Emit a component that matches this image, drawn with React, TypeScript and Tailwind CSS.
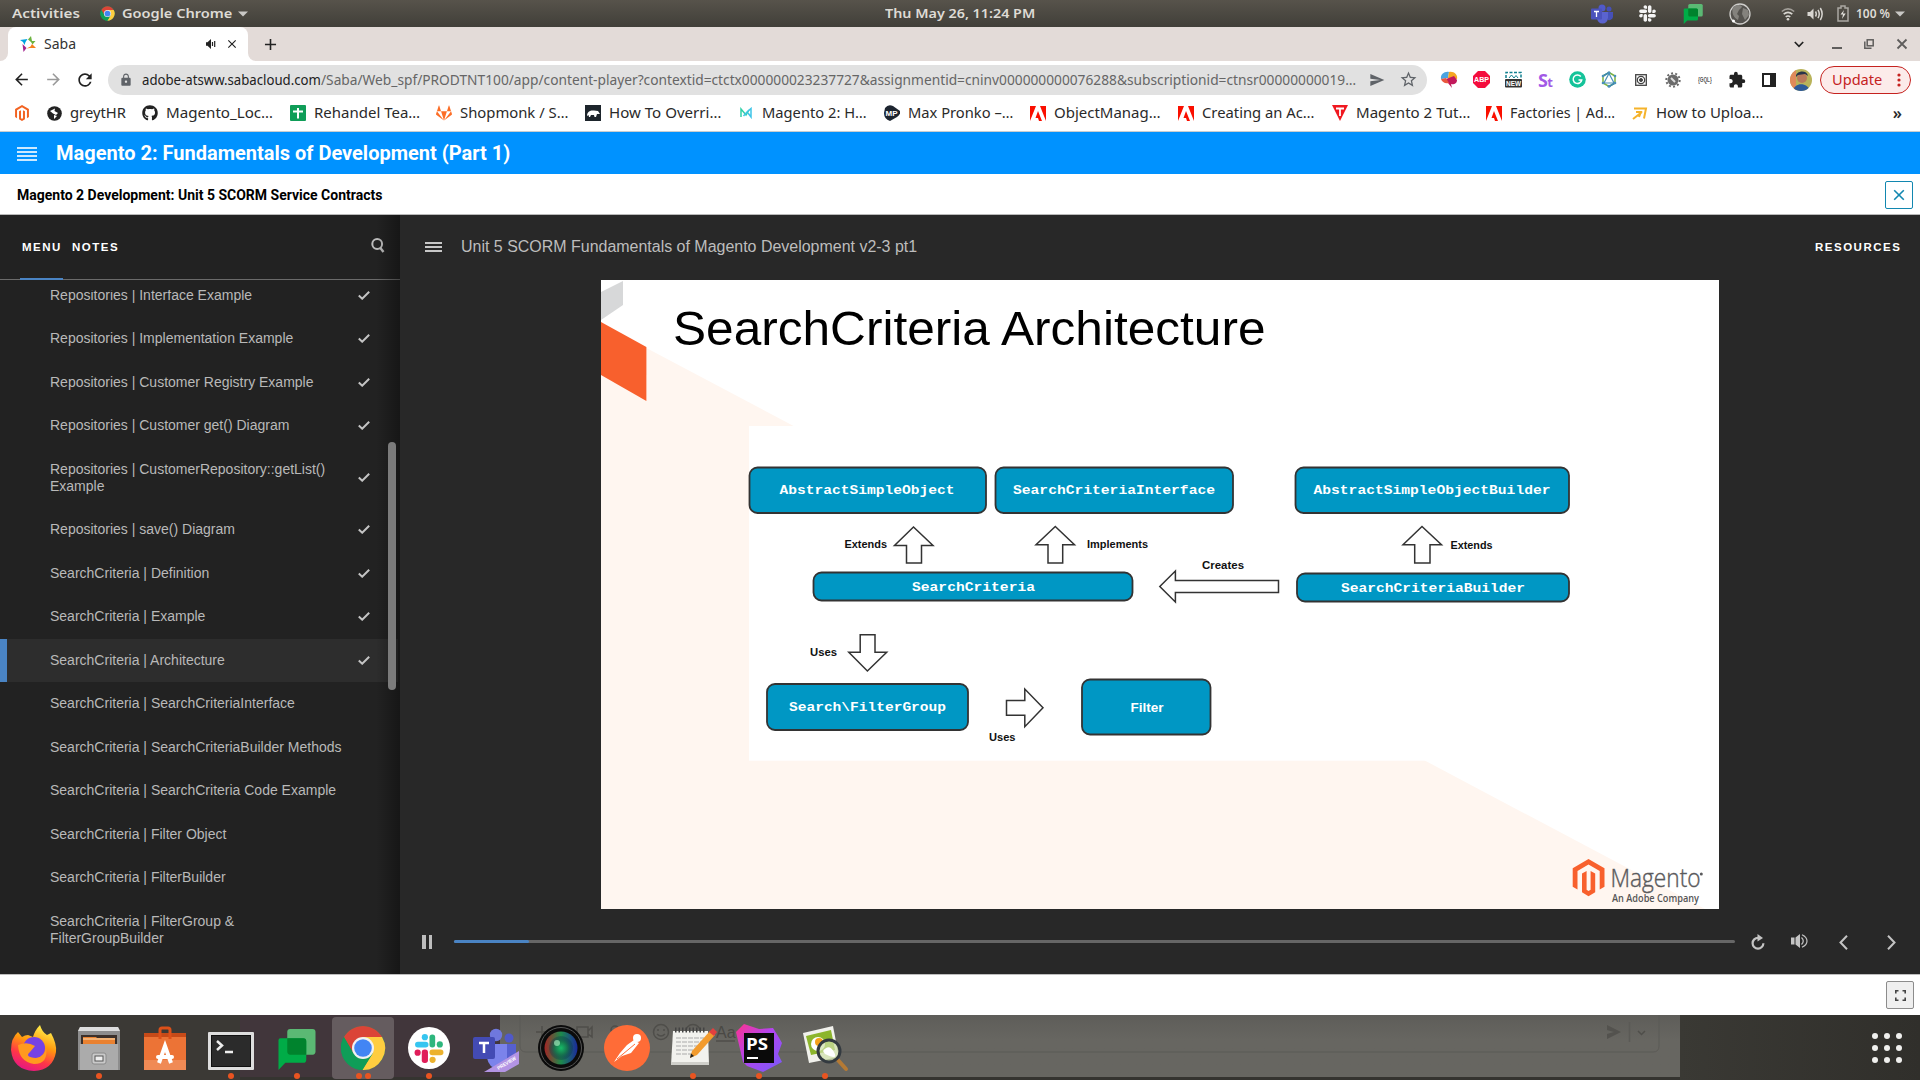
import { useLayoutEffect, useRef, useState, type ReactNode } from "react";
import { FaGithub, FaGitlab, FaMagento, FaSlack } from "react-icons/fa";
import { MdLock, MdStarBorder, MdExtension, MdSend, MdRefresh, MdArrowBack, MdArrowForward, MdClose, MdAdd } from "react-icons/md";

/** One line of text, stretched or squeezed to a given width. */
function Fit({ w, children, className = "" }: { w: number; children: ReactNode; className?: string }) {
  const ref = useRef<HTMLSpanElement>(null);
  const [k, setK] = useState(1);
  useLayoutEffect(() => {
    if (ref.current) setK(w / ref.current.offsetWidth);
  }, [w]);
  return (
    <span className={"block shrink-0 whitespace-pre " + className} style={{ width: w }}>
      <span ref={ref} className="inline-block origin-left" style={{ transform: `scaleX(${k})` }}>
        {children}
      </span>
    </span>
  );
}

function ChromeLogo({ size }: { size: number }) {
  return (
    <svg width={size} height={size} viewBox="0 0 48 48" className="shrink-0">
      <circle cx="24" cy="24" r="23" fill="#0f9d58" />
      <path d="M24 24 L4.1 12.5 A23 23 0 0 1 43.9 12.5 L24 12.5Z" fill="#db4437" />
      <path d="M24 12.5 H43.9 A23 23 0 0 1 23 47 L34 29.7Z" fill="#ffcd40" />
      <path d="M4.1 12.5 L14 29.7 L24 24 L24 12.5Z" fill="#db4437" />
      <path d="M4.1 12.5 L14.1 29.8 L24 35.5 L34 29.7 L23.5 47 A23 23 0 0 1 4.1 12.5Z" fill="#0f9d58" />
      <circle cx="24" cy="24" r="11.5" fill="#f1f1f1" />
      <circle cx="24" cy="24" r="9.2" fill="#4285f4" />
    </svg>
  );
}

function ChatLogo({ size }: { size: number }) {
  return (
    <svg width={size} height={size} viewBox="0 0 40 40" className="shrink-0">
      <rect x="10.500" y="0" width="29" height="25" rx="3" fill="#5bb974" />
      <path d="M3.500 9 H27 a3 3 0 0 1 3 3 V30 a3 3 0 0 1 -3 3 H8.500 L1.500 40 V11 a2 2 0 0 1 2-2Z" fill="#00ac47" />
      <path d="M10.500 9 H27 a3 3 0 0 1 3 3 V25 H13.500 a3 3 0 0 1 -3-3Z" fill="#00832d" />
    </svg>
  );
}

function Triangle() {
  return (
    <svg width="10" height="6" viewBox="0 0 10 6" className="shrink-0">
      <path d="M0 0.500H10L5 5.500Z" fill="#c9c8c5" />
    </svg>
  );
}

function TopBar() {
  return (
    <div className="grid h-[27px] grid-cols-3 items-center bg-linear-to-b from-[#57534b] to-[#413f39] font-['Noto_Sans'] text-[13px] leading-none font-semibold text-[#dedbd5]">
      <div className="flex items-center pl-[12px]">
        <Fit w={68}>Activities</Fit>
        <div className="ml-5"><ChromeLogo size={15} /></div>
        <Fit w={110} className="mr-[6px] ml-[7px]">Google Chrome</Fit>
        <Triangle />
      </div>
      <div className="flex justify-center">
        <Fit w={150}>Thu May 26, 11:24 PM</Fit>
      </div>
      <div className="flex items-center justify-end pr-[15px]">
        <svg width="22" height="20" viewBox="0 0 22 20" className="mr-[25px]">
          <circle cx="11" cy="4" r="3.500" fill="#5059c9" />
          <circle cx="18" cy="5" r="2.500" fill="#4650b8" />
          <path d="M6 8H17V14a5.500 5.500 0 0 1-11 0Z" fill="#5a63cf" />
          <path d="M17 8H22V13a4 4 0 0 1-5 3Z" fill="#4650b8" />
          <rect y="4.500" width="11" height="11" rx="1" fill="#4b53bc" />
          <path d="M3 7.500H8M5.500 7.500V13" stroke="#fff" strokeWidth="1.300" />
        </svg>
        <FaSlack size={19} color="#f4f4f4" className="mr-[26px]" />
        <div className="mr-[26px]"><ChatLogo size={20} /></div>
        <svg width="22" height="22" viewBox="0 0 22 22" className="mr-[30px]">
          <circle cx="11" cy="11" r="10" fill="#55534f" stroke="#cfcecb" strokeWidth="1.300" />
          <path d="M4 4C8 1 13 2 13 4L10 7 8 11 10 13 9 17C5 15 2 10 4 4ZM14 5L19 7 20 12 16 17 13 11Z" fill="#84827d" />
          <circle cx="4.500" cy="18" r="1.500" fill="#fff" />
        </svg>
        <svg width="14" height="14" viewBox="0 0 14 14" className="mr-[12px]" fill="none" stroke="#d8d6d1">
          <path d="M0.800 4.500Q7-0.800 13.200 4.500" strokeWidth="1.500" opacity=".6" />
          <path d="M2.700 7.200Q7 3.600 11.300 7.200" strokeWidth="1.700" />
          <path d="M4.700 9.800Q7 8 9.300 9.800" strokeWidth="1.500" />
          <circle cx="7" cy="12.300" r="1.300" fill="#d8d6d1" stroke="none" />
        </svg>
        <svg width="17" height="14" viewBox="0 0 17 14" className="mr-[13px]" fill="none" stroke="#d8d6d1" strokeWidth="1.500">
          <path d="M0.500 5H3L6.500 1.500V12.500L3 9H0.500Z" fill="#d8d6d1" stroke="none" />
          <path d="M8.500 4.500Q10 7 8.500 9.500M11 2.800Q13.500 7 11 11.200M13.300 1Q17 7 13.300 13" />
        </svg>
        <svg width="12" height="17" viewBox="0 0 12 17" className="mr-[7px]" fill="none" stroke="#aaa8a3" strokeWidth="1.500">
          <path d="M1 3H4V1H8V3H11V16H1Z" />
          <path d="M7 5L3.500 9.500H6L5 14 8.700 8.500H6Z" fill="#e4e2dd" stroke="none" />
        </svg>
        <Fit w={34} className="mr-[5px]">100 %</Fit>
        <Triangle />
      </div>
    </div>
  );
}

function TabStrip() {
  return (
    <div className="flex h-[34px] items-center bg-[#e3dbd8] text-[#333]">
      <div className="flex h-full w-2 items-end bg-white"><div className="h-full w-full rounded-br-lg bg-[#e3dbd8]" /></div>
      <div className="flex h-full w-60 items-center rounded-t-lg bg-white pl-3">
        <svg width="16" height="16" viewBox="0 0 16 16">
          <path d="M0 4L7.500 3 5.500 6 4.500 9 3 6Z" fill="#00a3e0" />
          <path d="M8 3.500L11 0 12 5 15.500 5 12.500 8.500 11 6Z" fill="#6cb33f" />
          <path d="M2.500 8L5.500 11 6.500 12 3.500 16Z" fill="#a3238e" />
          <path d="M12 8L16 12 10 12 6.500 12.500 10.500 10.500Z" fill="#f58220" />
        </svg>
        <Fit w={32} className="ml-2 font-['Noto_Sans'] text-[14px] leading-none">Saba</Fit>
        <svg width="10" height="10" viewBox="0 0 10 10" className="ml-[130px]" fill="#222">
          <path d="M0 3.200H1.500L5 0V10L1.500 6.800H0Z" />
          <path d="M6.500 3V7M8.700 2V8" stroke="#222" strokeWidth="1.200" />
        </svg>
        <MdClose size={14} className="ml-[9px]" color="#222" />
      </div>
      <div className="flex h-full w-2 bg-white"><div className="h-full w-full rounded-bl-lg bg-[#e3dbd8]" /></div>
      <MdAdd size={19} color="#222" className="ml-[5px]" />
      <div className="ml-auto flex items-center pr-[12px] text-[#5f5d5c]">
        <svg width="10" height="7" viewBox="0 0 10 7" className="mr-[28px]"><path d="M0.800 1L5 5.300 9.200 1" fill="none" stroke="#222" strokeWidth="1.700" /></svg>
        <div className="mt-[7px] mr-[22px] h-[2px] w-[10px] bg-current" />
        <svg width="10" height="10" viewBox="0 0 10 10" className="mr-[22px]" fill="none" stroke="currentColor" strokeWidth="1.500">
          <rect x="3.200" y="0.800" width="6" height="6" />
          <path d="M0.800 2.500V9.200H7.500" />
        </svg>
        <svg width="12" height="12" viewBox="0 0 12 12"><path d="M1.500 1.500L10.500 10.500M10.500 1.500L1.500 10.500" stroke="currentColor" strokeWidth="1.800" /></svg>
      </div>
    </div>
  );
}

const extensions: ReactNode[] = [
  <svg key="brain" width="18" height="18" viewBox="0 0 18 18">
    <path d="M1 8C0 3 5 0 9 1L8 7Z" fill="#4aa3e0" /><path d="M9 1C14 0 18 4 17 8L8 7Z" fill="#f5a623" />
    <path d="M6 8L14 5 17 9C17 13 13 14 11 13L12 17 8 12Z" fill="#c2185b" /><path d="M1 8L6 7 9 12C5 13 2 11 1 8Z" fill="#e9573f" />
  </svg>,
  <svg key="abp" width="17" height="17" viewBox="0 0 17 17">
    <path d="M5 0H12L17 5V12L12 17H5L0 12V5Z" fill="#f40d3d" />
    <text x="8.500" y="11.200" textAnchor="middle" fontSize="7.500" fontWeight="700" fill="#fff" fontFamily="Liberation Sans" textLength="15" lengthAdjust="spacingAndGlyphs">ABP</text>
  </svg>,
  <svg key="new" width="17" height="17" viewBox="0 0 17 17">
    <path d="M1 7V1.500H16V7" fill="none" stroke="#12808f" strokeWidth="1.500" strokeDasharray="3 1.500" /><path d="M4 7L6.500 4 9 7 11 4.500 13 7" fill="none" stroke="#12808f" />
    <rect y="8" width="17" height="8.500" rx="1" fill="#333" />
    <text x="8.500" y="14.700" textAnchor="middle" fontSize="7" fontWeight="700" fill="#fff" fontFamily="Liberation Sans" textLength="15" lengthAdjust="spacingAndGlyphs">NEW</text>
  </svg>,
  <span key="st" className="font-['Open_Sans'] text-[18px] leading-none font-bold tracking-tighter text-[#a259e6]">S<span className="text-[13px]">t</span></span>,
  <svg key="g" width="17" height="17" viewBox="0 0 17 17">
    <circle cx="8.500" cy="8.500" r="8.300" fill="#15c39a" /><path d="M11.800 5.500A4.300 4.300 0 1 0 12.700 9H9.500" fill="none" stroke="#fff" strokeWidth="1.500" />
  </svg>,
  <svg key="hex" width="16" height="17" viewBox="0 0 16 17" fill="none" strokeWidth="1.500">
    <path d="M8 1.500L14 5V12L8 15.500 2 12V5Z" stroke="#7cb342" /><path d="M8 2.500L13 12H3Z" stroke="#4a90b8" strokeWidth="1.200" /><path d="M8 1.500L2 5M8 15.500L14 12" stroke="#3c87b0" />
    <g fill="#4a90b8" stroke="none"><circle cx="8" cy="1.700" r="1.500" /><circle cx="2" cy="5" r="1.300" /><circle cx="14" cy="5" r="1.300" /><circle cx="2" cy="12" r="1.300" /><circle cx="14" cy="12" r="1.300" /><circle cx="8" cy="15.300" r="1.500" /></g>
  </svg>,
  <svg key="box" width="12" height="12" viewBox="0 0 12 12" fill="none" stroke="#444">
    <rect x="0.700" y="0.700" width="10.600" height="10.600" strokeWidth="1.300" /><circle cx="6" cy="6" r="3.700" strokeWidth="1.300" /><circle cx="6" cy="6" r="1.500" fill="#444" />
  </svg>,
  <svg key="bug" width="16" height="16" viewBox="0 0 16 16">
    <circle cx="8" cy="8" r="5.500" fill="#6b6b6b" /><circle cx="8" cy="8" r="6.700" fill="none" stroke="#6b6b6b" strokeWidth="2" strokeDasharray="2 2.200" />
    <path d="M6 6L10 10" stroke="#ddd" strokeWidth="2" />
  </svg>,
  <Fit key="gql" w={14} className="font-['Liberation_Sans'] text-[7px] font-bold text-[#555]">{"{GQL}"}</Fit>,
  <MdExtension key="ext" size={18} color="#222" />,
  <svg key="panel" width="14" height="14" viewBox="0 0 14 14"><rect x="1" y="1" width="12" height="12" fill="#fff" stroke="#222" strokeWidth="2" /><rect x="8" y="1" width="5" height="12" fill="#222" /></svg>,
  <svg key="avatar" width="22" height="22" viewBox="0 0 22 22">
    <defs><clipPath id="face"><circle cx="11" cy="11" r="11" /></clipPath></defs>
    <g clipPath="url(#face)">
      <rect width="22" height="22" fill="#b9b35a" /><rect x="0" width="6" height="22" fill="#e08a5b" />
      <circle cx="12" cy="9" r="5" fill="#b9795b" /><path d="M6 8C5 2 17 0 18 7L15 5 8 6Z" fill="#29344a" /><path d="M3 22C4 13 18 13 20 22Z" fill="#2e5b9a" />
    </g>
  </svg>,
];

function Toolbar() {
  return (
    <div className="flex h-[37px] items-center bg-white pr-[9px] font-['Noto_Sans'] text-[14px] leading-none">
      <div className="flex pl-[5px]">
        <span className="flex w-8 justify-center"><MdArrowBack size={19} color="#222" /></span>
        <span className="flex w-8 justify-center"><MdArrowForward size={19} color="#9a9a9a" /></span>
        <span className="flex w-8 justify-center"><MdRefresh size={20} color="#222" /></span>
      </div>
      <div className="ml-[7px] flex h-[30px] w-[1319px] items-center rounded-full bg-[#e1e1e1] pl-[11px]">
        <MdLock size={14} color="#5f6368" />
        <Fit w={179} className="ml-[9px] text-[#222]">adobe-atsww.sabacloud.com</Fit>
        <Fit w={1035} className="text-[#666]">/Saba/Web_spf/PRODTNT100/app/content-player?contextid=ctctx000000023237727&amp;assignmentid=cninv000000000076288&amp;subscriptionid=ctnsr00000000019…</Fit>
        <MdSend size={16} color="#5f6368" className="ml-[13px]" />
        <MdStarBorder size={19} color="#5f6368" className="ml-[14px]" />
      </div>
      <div className="ml-[6px] flex">
        {extensions.map((icon, i) => (
          <span key={i} className="flex h-6 w-8 items-center justify-center">{icon}</span>
        ))}
      </div>
      <div className="ml-[3px] flex h-[28px] w-[91px] items-center rounded-full border border-[#c5221f] bg-[#fcebea] pl-[11px] text-[#c5221f]">
        <Fit w={50}>Update</Fit>
        <svg width="4" height="14" viewBox="0 0 4 14" className="ml-[15px]" fill="#c5221f"><circle cx="2" cy="2" r="1.600" /><circle cx="2" cy="7" r="1.600" /><circle cx="2" cy="12" r="1.600" /></svg>
      </div>
    </div>
  );
}

const adobe = <svg width="16" height="15" viewBox="0 0 16 15"><path d="M0 0H6L0 15ZM10 0H16V15ZM8 5L12 15H9L8 12H5.500Z" fill="#fa0f00" /></svg>;

const bookmarks: { cell: string; icon: ReactNode; label: string; w: number }[] = [
  { cell: "w-8", icon: <FaMagento size={16} color="#f26322" />, label: "", w: 0 },
  {
    cell: "w-24",
    icon: <svg width="15" height="15" viewBox="0 0 15 15"><circle cx="7.500" cy="7.500" r="7.300" fill="#222" /><path d="M3 5L8 2.500 7.500 5 11 7 9 9 6 7.500ZM7 9L10 10 7 13Z" fill="#fff" /></svg>,
    label: "greytHR", w: 56,
  },
  { cell: "w-[148px]", icon: <FaGithub size={16} color="#222" />, label: "Magento_Loc…", w: 107 },
  {
    cell: "w-[146px]",
    icon: <svg width="16" height="16" viewBox="0 0 16 16"><rect width="16" height="16" rx="1" fill="#0f9d58" /><path d="M3 6.500H13M8 3V13.500" stroke="#fff" strokeWidth="2" /></svg>,
    label: "Rehandel Tea…", w: 106,
  },
  { cell: "w-[149px]", icon: <FaGitlab size={16} color="#fc6d26" />, label: "Shopmonk / S…", w: 108 },
  {
    cell: "w-[153px]",
    icon: <svg width="16" height="16" viewBox="0 0 16 16"><rect width="16" height="16" fill="#1d252c" /><path d="M2 11C2 6 6 5 9 5.500L13 6 15 9 12 9 11 12H9.500L9 10 6 10 5 12H4L3.500 10Z" fill="#fff" /></svg>,
    label: "How To Overri…", w: 112,
  },
  {
    cell: "w-[146px]",
    icon: <svg width="16" height="12" viewBox="0 0 16 12" fill="none" strokeWidth="1.500"><path d="M3 10V2L8 8 11 3" stroke="#32d0a8" /><path d="M5.500 9L9 5 13 1.500V10L10 6" stroke="#3fc5e8" /></svg>,
    label: "Magento 2: H…", w: 105,
  },
  {
    cell: "w-[146px]",
    icon: <svg width="16" height="16" viewBox="0 0 16 16"><path d="M1 3Q4-1 9 1L16 6Q17 9 13 12L6 16Q0 14 0 8Z" fill="#1d2530" /><text x="7.500" y="11" textAnchor="middle" fontSize="8" fontWeight="700" fill="#fff" fontFamily="Liberation Sans">MP</text></svg>,
    label: "Max Pronko –…", w: 105,
  },
  { cell: "w-[148px]", icon: adobe, label: "ObjectManag…", w: 107 },
  { cell: "w-[154px]", icon: adobe, label: "Creating an Ac…", w: 113 },
  {
    cell: "w-[154px]",
    icon: <svg width="16" height="16" viewBox="0 0 16 16"><path d="M0 0H16L8 16Z" fill="#f01820" /><path d="M4 3.500H12M8 3.500V11" stroke="#fff" strokeWidth="1.800" /></svg>,
    label: "Magento 2 Tut…", w: 114,
  },
  { cell: "w-[146px]", icon: adobe, label: "Factories | Ad…", w: 105 },
  {
    cell: "w-[140px]",
    icon: <svg width="16" height="13" viewBox="0 0 16 13" fill="none" stroke="#f5b32b" strokeWidth="2"><path d="M2 1.500H14L12 11.500M1 12L10 5M4 5H9L7 10" /></svg>,
    label: "How to Uploa…", w: 107,
  },
];

function Bookmarks() {
  return (
    <div className="flex h-[34px] items-center border-b border-[#c9cdd0] bg-white pb-[3px] pl-[14px] font-['Noto_Sans'] text-[14px] leading-none text-[#2a2a2a]">
      {bookmarks.map((b, i) => (
        <div key={i} className={"flex shrink-0 items-center " + b.cell}>
          <span className="mr-2 flex w-4 shrink-0 justify-center">{b.icon}</span>
          {b.label && <Fit w={b.w}>{b.label}</Fit>}
        </div>
      ))}
      <span className="mr-[18px] ml-auto text-[16px] font-semibold">»</span>
    </div>
  );
}

function CourseHeader() {
  return (
    <>
      <div className="flex h-[42px] items-center bg-[#0092ff] pl-[17px] font-['Roboto'] text-white">
        <div className="flex flex-col gap-[2px] pt-px">
          <div className="h-[2px] w-5 bg-white/80" />
          <div className="h-[2px] w-5 bg-white/80" />
          <div className="h-[2px] w-5 bg-white/80" />
          <div className="h-[2px] w-5 bg-white/80" />
        </div>
        <Fit w={454} className="ml-[19px] text-[20px] leading-none font-bold">Magento 2: Fundamentals of Development (Part 1)</Fit>
      </div>
      <div className="flex h-[41px] items-center justify-between border-b border-[#b9b9b9] bg-white pt-px pr-[7px] pl-[17px] font-['Roboto']">
        <Fit w={365} className="text-[14px] leading-none font-bold text-black">Magento 2 Development: Unit 5 SCORM Service Contracts</Fit>
        <div className="flex size-7 items-center justify-center rounded-[2px] border border-[#1287b0]">
          <svg width="12" height="12" viewBox="0 0 12 12"><path d="M1.200 1.200L10.800 10.800M10.800 1.200L1.200 10.800" stroke="#1287b0" strokeWidth="1.600" /></svg>
        </div>
      </div>
    </>
  );
}

const lessons: { title: string; done?: boolean; active?: boolean }[] = [
  { title: "Repositories | Interface Example", done: true },
  { title: "Repositories | Implementation Example", done: true },
  { title: "Repositories | Customer Registry Example", done: true },
  { title: "Repositories | Customer get() Diagram", done: true },
  { title: "Repositories | CustomerRepository::getList()\nExample", done: true },
  { title: "Repositories | save() Diagram", done: true },
  { title: "SearchCriteria | Definition", done: true },
  { title: "SearchCriteria | Example", done: true },
  { title: "SearchCriteria | Architecture", done: true, active: true },
  { title: "SearchCriteria | SearchCriteriaInterface" },
  { title: "SearchCriteria | SearchCriteriaBuilder Methods" },
  { title: "SearchCriteria | SearchCriteria Code Example" },
  { title: "SearchCriteria | Filter Object" },
  { title: "SearchCriteria | FilterBuilder" },
  { title: "SearchCriteria | FilterGroup &\nFilterGroupBuilder" },
];

function Sidebar() {
  return (
    <aside className="relative flex w-[400px] shrink-0 flex-col bg-[#222]">
      <div className="flex h-[65px] items-stretch border-b border-[#6b6b6b] pl-5 text-[11.500px] leading-none font-bold text-white">
        <div className="-mb-px flex w-[43px] items-center border-b-2 border-[#4a84c4] pt-[2px] pl-[2px]"><Fit w={40} className="tracking-[1.500px]">MENU</Fit></div>
        <div className="flex items-center pt-px pl-[9px]"><Fit w={47} className="tracking-[1.500px]">NOTES</Fit></div>
        <svg width="14" height="15" viewBox="0 0 14 15" className="mt-[23px] mr-[15px] ml-auto" fill="none" stroke="#bcbcbc">
          <circle cx="6.200" cy="6" r="4.900" strokeWidth="2" /><path d="M9 9.500L12.500 14" strokeWidth="2.400" />
        </svg>
      </div>
      <div className="mt-[10px] flex-1 overflow-hidden">
        <div className="-mt-[16.500px] flex flex-col text-[14px] leading-[17px] text-[#b9b9b9]">
          {lessons.map((l) => (
            <div
              key={l.title}
              className={"mr-[2px] flex items-center border-l-[7px] py-[13.250px] pr-[28px] pl-[43px] " + (l.active ? "border-[#4a84c4] bg-[#2d2d2d]" : "border-transparent")}
            >
              <span className="whitespace-pre">{l.title}</span>
              {l.done && (
                <svg width="12" height="9" viewBox="0 0 12 9" className="ml-auto"><path d="M0.800 4.500L4.200 7.700 11.200 0.800" fill="none" stroke="#c4c4c4" strokeWidth="2" /></svg>
              )}
            </div>
          ))}
        </div>
      </div>
      <div className="absolute inset-y-0 right-0 w-6 bg-linear-to-r from-transparent to-black/35" />
      <div className="absolute top-[227px] left-[388px] h-[248px] w-2 rounded-full bg-[#7b7b7b]" />
    </aside>
  );
}

const boxes: { x: number; y: number; w: number; h: number; label: string; tx: number; ty: number; tw: number; sans?: boolean }[] = [
  { x: 749.500, y: 467.500, w: 236.500, h: 45.500, label: "AbstractSimpleObject", tx: 779.500, ty: 494, tw: 175 },
  { x: 995.500, y: 467.500, w: 237.500, h: 45.500, label: "SearchCriteriaInterface", tx: 1013, ty: 494, tw: 202 },
  { x: 1295.500, y: 467.500, w: 273.500, h: 45.500, label: "AbstractSimpleObjectBuilder", tx: 1313.500, ty: 494, tw: 237 },
  { x: 813.500, y: 572.500, w: 319, h: 28, label: "SearchCriteria", tx: 912, ty: 590.500, tw: 123 },
  { x: 1297, y: 573.500, w: 272, h: 28, label: "SearchCriteriaBuilder", tx: 1341, ty: 591.500, tw: 184 },
  { x: 767, y: 684, w: 201, h: 46, label: "Search\\FilterGroup", tx: 789, ty: 710.500, tw: 157 },
  { x: 1082, y: 679.500, w: 128.500, h: 55, label: "Filter", tx: 1130.500, ty: 711.500, tw: 33, sans: true },
];

const arrows = [
  "913.500,527 933,545.500 921.500,545.500 921.500,563 906.500,563 906.500,545.500 894.500,545.500",
  "1055.300,526.500 1074.500,544.700 1062.700,544.700 1062.700,563 1048,563 1048,544.700 1036,544.700",
  "1422,526.500 1441.500,544.700 1430,544.700 1430,563 1414.700,563 1414.700,544.700 1403,544.700",
  "1159.800,586.500 1175.400,571 1175.400,580.500 1278.500,580.500 1278.500,592.500 1175.400,592.500 1175.400,602",
  "860.200,634.700 875,634.700 875,652.300 886.700,652.300 867.400,671 848.800,652.300 860.200,652.300",
  "1006.500,700.500 1024.800,700.500 1024.800,689 1043,707.800 1024.800,726.700 1024.800,715.300 1006.500,715.300",
];

const notes: [string, number, number, number][] = [
  ["Extends", 844.500, 547.500, 42.500],
  ["Implements", 1087, 547.500, 61],
  ["Creates", 1202, 568.500, 42],
  ["Extends", 1450.500, 548.500, 42],
  ["Uses", 810, 655.500, 27],
  ["Uses", 989, 740.500, 26.500],
];

function Slide() {
  return (
    <div className="relative ml-[201px] h-[629px] w-[1118px] overflow-hidden bg-white">
      <svg width="1118" height="629" viewBox="601 280 1118 629" className="absolute inset-0">
        <polygon points="601,324 1705,909 601,909" fill="#fff6f0" />
        <polygon points="601,292 623,281 623,305 601,320" fill="#d7d8d9" />
        <polygon points="601,322 646.400,347 646.400,401 601,375" fill="#f8602d" />
        <rect x="749" y="426" width="822" height="334.700" fill="#fff" />
        {boxes.map((b) => (
          <g key={b.label}>
            <rect x={b.x} y={b.y} width={b.w} height={b.h} rx="8" fill="#0097c4" stroke="#333" strokeWidth="1.800" />
            <text x={b.tx} y={b.ty} textLength={b.tw} lengthAdjust="spacingAndGlyphs" fontSize={b.sans ? 12.500 : 12.500} fontWeight="700" fill="#fff" fontFamily={b.sans ? "Liberation Sans" : "Liberation Mono"}>
              {b.label}
            </text>
          </g>
        ))}
        {arrows.map((p) => (
          <polygon key={p} points={p} fill="#fff" stroke="#333" strokeWidth="1.500" />
        ))}
        {notes.map(([t, x, y, w]) => (
          <text key={t + x} x={x} y={y} textLength={w} lengthAdjust="spacingAndGlyphs" fontSize="10.500" fontWeight="700" fill="#111" fontFamily="Liberation Sans">{t}</text>
        ))}
        <path d="M1588.500 859L1604.500 868.300V886.800L1599.700 889.500V871L1588.500 864.600 1577.500 871V889.500L1572.700 886.800V868.300Z" fill="#f8602d" />
        <path d="M1582 873.500L1586.600 871V889.800L1588.500 891 1590.600 889.800V871L1595.200 873.500V892.300L1588.500 896.200 1582 892.300Z" fill="#f8602d" />
        <text x="1610.500" y="886.700" textLength="90" lengthAdjust="spacingAndGlyphs" fontSize="25" fill="#5a5a5c" stroke="#5a5a5c" strokeWidth="0.400" fontFamily="Open Sans" fontWeight="300">Magento</text>
        <circle cx="1701.300" cy="874" r="1.500" fill="#5a5a5c" />
        <text x="1612" y="901.700" textLength="87" lengthAdjust="spacingAndGlyphs" fontSize="10.500" fill="#555" fontFamily="Open Sans" fontWeight="600">An Adobe Company</text>
      </svg>
      <div className="relative pt-[20px] pl-[72px] text-[49px] leading-[56px] text-black"><Fit w={593}>SearchCriteria Architecture</Fit></div>
    </div>
  );
}

function Player() {
  return (
    <main className="flex flex-1 flex-col bg-[#282828] text-[#bdbdbd]">
      <div className="flex h-[65px] items-center pr-[19px] pb-px pl-[25px]">
        <div className="flex flex-col gap-[2px]">
          <div className="h-[2px] w-[17px] bg-[#c8c8c8]" />
          <div className="h-[2px] w-[17px] bg-[#c8c8c8]" />
          <div className="h-[2px] w-[17px] bg-[#c8c8c8]" />
        </div>
        <Fit w={456} className="ml-[19px] text-[16px] leading-none">Unit 5 SCORM Fundamentals of Magento Development v2-3 pt1</Fit>
        <Fit w={86} className="mt-[2px] ml-auto text-[11.500px] leading-none font-bold tracking-[1.500px] text-white">RESOURCES</Fit>
      </div>
      <Slide />
      <div className="flex flex-1 items-center pt-px pl-[22px]">
        <div className="flex gap-[3px]">
          <div className="h-[14px] w-[3.500px] bg-[#bdbdbd]" />
          <div className="h-[14px] w-[3.500px] bg-[#bdbdbd]" />
        </div>
        <div className="mb-px ml-[22px] h-[3px] w-[1281px] rounded-full bg-[#666]"><div className="h-full w-[75px] rounded-full bg-[#4a84c4]" /></div>
        <svg width="14" height="16" viewBox="0 0 14 16" className="ml-[16px]"><path d="M7 3.800A5.400 5.400 0 1 0 12.400 9.300" fill="none" stroke="#c4c4c4" strokeWidth="2.200" /><path d="M6.500 0L12 4 6.500 7.500Z" fill="#c4c4c4" /></svg>
        <svg width="17" height="14" viewBox="0 0 17 14" className="mb-[2px] ml-[26px]" fill="none" stroke="#c4c4c4" strokeWidth="1.200">
          <path d="M0 3.500H3.500V10.500H0ZM4.500 3.500L9 0V14L4.500 10.500Z" fill="#c4c4c4" stroke="none" /><path d="M10.500 3.500Q14 7 10.500 10.500M11 0.700Q16 3 16 7T11 13.300" />
        </svg>
        <svg width="9" height="15" viewBox="0 0 9 15" className="ml-[31px]"><path d="M8 0.800L1.500 7.500 8 14.200" fill="none" stroke="#c4c4c4" strokeWidth="2" /></svg>
        <svg width="9" height="15" viewBox="0 0 9 15" className="ml-[39px]"><path d="M1 0.800L7.500 7.500 1 14.200" fill="none" stroke="#c4c4c4" strokeWidth="2" /></svg>
      </div>
    </main>
  );
}

const slackMark = (
  <g>
    <g fill="#36c5f0"><rect x="12" y="19" width="13" height="5.500" rx="2.700" /><circle cx="21.500" cy="14.500" r="3" /></g>
    <g fill="#2eb67d"><rect x="26" y="12" width="5.500" height="12.500" rx="2.700" /><circle cx="36" cy="21.500" r="3" /></g>
    <g fill="#ecb22e"><rect x="26" y="26.500" width="13.500" height="5.500" rx="2.700" /><circle cx="29" cy="36.500" r="3" /></g>
    <g fill="#e01e5a"><rect x="18.500" y="26.500" width="6" height="13" rx="2.700" /><circle cx="14.500" cy="29.500" r="3" /></g>
  </g>
);

const dock: { name: string; dots: number; open?: boolean; art: ReactNode }[] = [
  {
    name: "firefox", dots: 0,
    art: <g>
      <defs><linearGradient id="ff" x1=".7" y1="0" x2=".3" y2="1"><stop offset="0" stopColor="#fff44f" /><stop offset=".4" stopColor="#ff980e" /><stop offset=".7" stopColor="#ff3647" /><stop offset="1" stopColor="#e31587" /></linearGradient></defs>
      <path d="M9 8L13 13Q16 11 19 11L24 13Q26 6 31 1Q33 8 38 11L42 9Q48 20 47 28Q44 46 25 47Q4 46 2 26Q2 14 9 8Z" fill="url(#ff)" />
      <circle cx="25" cy="24" r="11" fill="#7542e5" /><path d="M9 21Q18 17 26 22L21 28Q15 33 27 34Q37 32 37 22Q40 40 25 40Q10 38 9 21Z" fill="#ff9a1f" />
    </g>,
  },
  {
    name: "files", dots: 1,
    art: <g><path d="M5 3H43L45 7V46H3V7Z" fill="#8d8d8d" /><path d="M5 3H43L45 7H3Z" fill="#ddd" /><rect x="6" y="11" width="36" height="12" fill="#3b302a" /><path d="M8 13H21L22 14H40V20H8Z" fill="#e98130" /><path d="M8 15H40" stroke="#ffe4b8" /><rect x="5" y="20" width="38" height="26" fill="#ababab" /><rect x="17" y="29" width="14" height="11" rx="2" fill="#c9c9c9" stroke="#8a8a8a" /><rect x="20" y="32" width="8" height="5" fill="#eee" stroke="#555" /></g>,
  },
  {
    name: "software", dots: 0,
    art: <g><path d="M3 9H45V46H3Z" fill="#ec7336" /><path d="M3 9H45V13H3Z" fill="#c64a18" /><path d="M3 36H45V46H3Z" fill="#f08a55" /><path d="M19 15V6Q19 4 21 4H27Q29 4 29 6V15" fill="none" stroke="#dd5019" strokeWidth="3" /><path d="M18 39L24 22 30 39" fill="none" stroke="#fff" strokeWidth="4" /><rect x="15" y="31" width="18" height="4" rx="2" fill="#fff" /></g>,
  },
  {
    name: "terminal", dots: 1,
    art: <g><rect x="1" y="8" width="46" height="38" rx="1" fill="#dedede" /><rect x="4.500" y="11.500" width="39" height="31" fill="#2b2b2b" stroke="#111" /><path d="M10 17L15 21.500 10 26M18 28H26" fill="none" stroke="#eee" strokeWidth="2.500" /></g>,
  },
  { name: "chat", dots: 1, art: <svg x="5" y="5" width="38" height="41" viewBox="1 0 39 40" preserveAspectRatio="none"><ChatLogo size={40} /></svg> },
  { name: "chrome", dots: 2, open: true, art: <svg x="1" y="1" width="46" height="46"><ChromeLogo size={46} /></svg> },
  { name: "slack", dots: 1, art: <g><circle cx="24" cy="24" r="21" fill="#fff" /><svg x="8" y="8" width="33" height="33" viewBox="10 9.500 32 32">{slackMark}</svg></g> },
  {
    name: "teams", dots: 0,
    art: <g><circle cx="25" cy="11" r="6.200" fill="#6f78dd" /><circle cx="38" cy="14" r="4.500" fill="#5059c9" /><path d="M16 20H36V34Q34 44 26 44T16 34Z" fill="#7b83eb" /><path d="M36 20H45V36L36 38Z" fill="#5660cf" /><rect x="2" y="13" width="22" height="22" rx="2" fill="#434bb4" /><path d="M8 19H18M13 19V29" stroke="#fff" strokeWidth="2.500" /><path d="M13 48L48 27V40L34 48Z" fill="#b394e4" /><text x="0" y="0" transform="translate(27.500 46) rotate(-31)" fontSize="5" fontWeight="700" fill="#fff" fontFamily="Liberation Sans" textLength="21" lengthAdjust="spacingAndGlyphs">PREVIEW</text></g>,
  },
  {
    name: "camera", dots: 0,
    art: <g>
      <defs><radialGradient id="lens"><stop offset="0" stopColor="#16c06a" /><stop offset=".5" stopColor="#157a4e" /><stop offset="1" stopColor="#0c2a4a" stopOpacity=".3" /></radialGradient><linearGradient id="rim"><stop offset="0" stopColor="#a32626" /><stop offset=".5" stopColor="#1c8a4c" /><stop offset="1" stopColor="#1b2a9c" /></linearGradient></defs>
      <circle cx="24" cy="24" r="23" fill="#0b0b0b" /><circle cx="24" cy="24" r="20.500" fill="none" stroke="#555" /><circle cx="24" cy="24" r="16.500" fill="url(#rim)" /><circle cx="24" cy="24" r="12" fill="url(#lens)" opacity=".9" /><circle cx="20" cy="19" r="3" fill="#9fe8b8" opacity=".7" />
    </g>,
  },
  { name: "postman", dots: 0, art: <g><circle cx="24" cy="24" r="23" fill="#ff6c37" /><circle cx="34" cy="14" r="4" fill="#fff" /><path d="M31 16L36 19 28 29 19 32 11 38 17 29 24 21Z" fill="#fff" /><path d="M14 35L32 20" stroke="#ff6c37" /></g> },
  {
    name: "notes", dots: 1,
    art: <g><path d="M4 7H39L40 41H2Z" fill="#f2f2ee" /><path d="M2 38H40V41H2Z" fill="#cfcfca" /><path d="M6 6H37" stroke="#444" strokeWidth="5" strokeDasharray="1.500 2" /><path d="M7 14H35M7 18H33M7 22H28M7 26H30M7 30H24" stroke="#aaa" strokeDasharray="5 1" /><path d="M21 34L23 27 41 7 46 11 28 31Z" fill="#f29b2e" /><path d="M40 8L44 4 48 8 45 12Z" fill="#e2403f" /><path d="M21 34L22 29.500 25 32Z" fill="#222" /></g>,
  },
  {
    name: "phpstorm", dots: 1,
    art: <g>
      <defs><linearGradient id="ps" x1="0" y1="0" x2="1" y2="1"><stop offset="0" stopColor="#ff318c" /><stop offset=".45" stopColor="#b345f1" /><stop offset="1" stopColor="#765af8" /></linearGradient></defs>
      <path d="M1 8L9 0 24 5 38 4 43 12 47 19 43 30 47 38 28 48 12 42 8 38Z" fill="url(#ps)" /><rect x="9" y="9" width="30" height="30" fill="#0a0a0a" />
      <text x="11" y="25.500" fontSize="16" fontWeight="700" fill="#fff" fontFamily="Open Sans" textLength="22" lengthAdjust="spacingAndGlyphs">PS</text><rect x="12" y="33" width="11" height="2" fill="#fff" />
    </g>,
  },
  {
    name: "viewer", dots: 1,
    art: <g><path d="M2 9L32 2 38 33 8 39Z" fill="#f1f1ec" /><path d="M5 12L30 6 34 26 10 31Z" fill="#8cb52c" /><circle cx="17" cy="20" r="7" fill="#fff" /><circle cx="18" cy="18" r="4" fill="#f5a11b" /><path d="M36 35L45 45" stroke="#b57a35" strokeWidth="4" strokeLinecap="round" /><circle cx="28" cy="27" r="11" fill="#cfe0a8" fillOpacity=".7" stroke="#333a40" strokeWidth="3" /><path d="M22 27Q28 19 33 28T24 30Z" fill="#fff" /></g>,
  },
];

function Dock() {
  return (
    <footer className="relative flex h-[65px] bg-[#353430]">
      <div className="h-full w-[240px] bg-[#3b3935]" />
      <div className="h-[62px] w-[260px] bg-[#41363b]" />
      <div className="h-[62px] w-[1180px] bg-linear-to-b from-[#5e5d59] to-[#676661] to-40%" />
      <div className="h-full flex-1 bg-linear-to-r from-[#3a3934] to-[#302f2b]" />
      <svg width="1180" height="62" viewBox="500 1015 1180 62" className="absolute top-0 left-[500px]" fill="none" stroke="#4f4e4a" strokeWidth="1.500">
        <path d="M520 1015V1046Q520 1052 526 1052H1653Q1659 1052 1659 1046V1015" stroke="#5b5a56" strokeWidth="1" />
        <path d="M536 1032H548M542 1026V1038M577 1027H588V1037H577ZM588 1031L592 1027V1037L588 1034" />
        <circle cx="661" cy="1032" r="7.500" /><path d="M657 1034Q661 1038 665 1034M658 1029V1031M664 1029V1031" /><circle cx="693" cy="1032" r="7.500" /><circle cx="615" cy="1030" r="4" />
        <text x="716" y="1038" fontSize="16" fill="#4a4945" stroke="none" fontFamily="Liberation Sans">Aa</text><path d="M716 1041H735" />
        <path d="M1607 1025L1621 1032 1607 1039V1034L1614 1032 1607 1030Z" fill="#53524e" stroke="none" /><path d="M1629.500 1022V1042" stroke="#5b5a56" /><path d="M1638 1031L1641.500 1034.500 1645 1031" />
      </svg>
      <div className="absolute inset-0 flex items-start justify-between">
        <div className="flex">
          {dock.map((d) => (
            <div key={d.name} className="flex h-[65px] w-[66px] justify-center pt-[2px]">
              <div className={"flex h-[62px] w-[62px] flex-col items-center rounded-[4px] pt-[7px] " + (d.open ? "bg-[#655c5f]" : "")}>
                <svg width="48" height="48" viewBox="0 0 48 48" className="shrink-0">{d.art}</svg>
                <div className="mt-[1px] flex gap-[3px]">
                  {Array.from({ length: d.dots }, (_, i) => (
                    <span key={i} className="size-[6px] rounded-full bg-[#e95420]" />
                  ))}
                </div>
              </div>
            </div>
          ))}
        </div>
        <div className="mt-[18px] mr-[18px] grid grid-cols-3 gap-[6px]">
          {Array.from({ length: 9 }, (_, i) => (
            <span key={i} className="size-[6px] rounded-full bg-[#f0f0ee]" />
          ))}
        </div>
      </div>
    </footer>
  );
}

export default function App() {
  return (
    <div className="flex h-[1080px] w-[1920px] flex-col overflow-hidden bg-white font-['Liberation_Sans',sans-serif]">
      <TopBar />
      <TabStrip />
      <Toolbar />
      <Bookmarks />
      <CourseHeader />
      <div className="flex h-[759px]">
        <Sidebar />
        <Player />
      </div>
      <div className="flex h-[41px] items-center justify-end border-t border-[#bdbdbd] bg-white pr-[6px]">
        <div className="flex size-7 items-center justify-center rounded-[2px] border border-[#8c8c8c] bg-[#efefef]">
          <svg width="11" height="11" viewBox="0 0 11 11"><path d="M0.800 3.500V0.800H3.500M7.500 0.800H10.200V3.500M10.200 7.500V10.200H7.500M3.500 10.200H0.800V7.500" fill="none" stroke="#444" strokeWidth="1.600" /></svg>
        </div>
      </div>
      <Dock />
    </div>
  );
}
